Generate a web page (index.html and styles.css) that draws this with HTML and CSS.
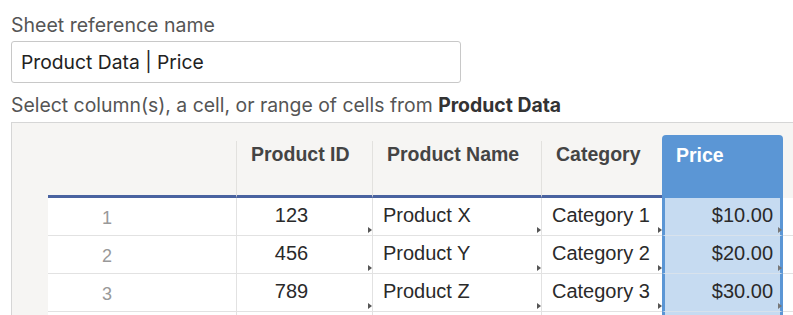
FILE: index.html
```html
<!DOCTYPE html>
<html lang="en">
<head>
    <meta charset="UTF-8">
    <title>Sheet reference</title>
    <link rel="stylesheet" href="styles.css">
</head>
<body>
    <div class="panel">
        <label class="field-label" for="ref-name">Sheet reference name</label>
        <div class="field-input" id="ref-name">Product Data | Price</div>
        <p class="hint">Select column(s), a cell, or range of cells from <strong>Product Data</strong></p>

        <div class="sheet">
            <div class="sheet-row head">
                <div class="gutter"></div>
                <div class="hcell rownum"></div>
                <div class="hcell sep">Product ID</div>
                <div class="hcell sep">Product Name</div>
                <div class="hcell sep">Category</div>
                <div class="hcell picked">Price</div>
                <div class="filler"></div>
            </div>

            <div class="sheet-row">
                <div class="gutter"></div>
                <div class="cell rownum">1</div>
                <div class="cell sep center">123<i class="mark"></i></div>
                <div class="cell sep">Product X<i class="mark"></i></div>
                <div class="cell sep">Category 1<i class="mark"></i></div>
                <div class="cell picked right">$10.00<i class="mark"></i></div>
                <div class="cell blank"></div>
            </div>
            <div class="sheet-row">
                <div class="gutter"></div>
                <div class="cell rownum">2</div>
                <div class="cell sep center">456<i class="mark"></i></div>
                <div class="cell sep">Product Y<i class="mark"></i></div>
                <div class="cell sep">Category 2<i class="mark"></i></div>
                <div class="cell picked right">$20.00<i class="mark"></i></div>
                <div class="cell blank"></div>
            </div>
            <div class="sheet-row">
                <div class="gutter"></div>
                <div class="cell rownum">3</div>
                <div class="cell sep center">789<i class="mark"></i></div>
                <div class="cell sep">Product Z<i class="mark"></i></div>
                <div class="cell sep">Category 3<i class="mark"></i></div>
                <div class="cell picked right">$30.00<i class="mark"></i></div>
                <div class="cell blank"></div>
            </div>
            <div class="sheet-row">
                <div class="gutter"></div>
                <div class="cell rownum"></div>
                <div class="cell sep"></div>
                <div class="cell sep"></div>
                <div class="cell sep"></div>
                <div class="cell picked"></div>
                <div class="cell blank"></div>
            </div>
        </div>
    </div>
</body>
</html>
```

FILE: styles.css
```css
body {
    margin: 0;
    background: #ffffff;
    font-family: Inter, 'Noto Sans', sans-serif;
    overflow: hidden;
}
.panel {
    padding: 14px 0 0 11px;
}
.field-label {
    display: block;
    font-size: 19.5px;
    line-height: 22px;
    color: #555;
}
.field-input {
    box-sizing: border-box;
    width: 450px;
    height: 42px;
    margin-top: 5px;
    padding: 0 9px;
    border: 1px solid #c8c8c8;
    border-radius: 3px;
    font-size: 19.3px;
    line-height: 40px;
    color: #222;
}
.hint {
    margin: 10px 0 0;
    font-size: 19.4px;
    line-height: 24px;
    color: #555;
}
.hint strong {
    color: #333;
}

/* sheet grid */
.sheet {
    margin-top: 5px;
    border-top: 1px solid #d6d6d6;
    border-left: 1px solid #d6d6d6;
    background: #f6f5f3;
    font-family: 'Liberation Sans', Arial, sans-serif;
}
.sheet-row {
    display: grid;
    grid-template-columns: 36px 188px 136px 169px 121px 121px 1fr;
}
.sheet-row.head {
    height: 75px;
    align-items: end;
}
.hcell {
    box-sizing: border-box;
    height: 57px;
    padding: 2px 0 0 14px;
    border-bottom: 3px solid #4a63a0;
    font-size: 19.5px;
    font-weight: 700;
    line-height: 23px;
    color: #444;
}
.hcell.sep {
    border-left: 1px solid #e2e1de;
}
.hcell.picked {
    height: 63px;
    padding-top: 9px;
    border-bottom: 0;
    border-radius: 4px 4px 0 0;
    background: #5b96d5;
    color: #fff;
}
.cell {
    position: relative;
    box-sizing: border-box;
    height: 38px;
    padding: 0 10px;
    border-bottom: 1px solid #e2e2e2;
    background: #fff;
    font-size: 20px;
    line-height: 34px;
    color: #2a2a2a;
    white-space: nowrap;
}
.cell.sep {
    border-left: 1px solid #e2e2e2;
}
.cell.center {
    text-align: center;
    padding-right: 36px;
}
.cell.right {
    text-align: right;
}
.cell.rownum {
    padding: 3px 70px 0 0;
    text-align: center;
    font-size: 18px;
    color: #999;
}
.cell.picked {
    padding-right: 7px;
    border-left: 3px solid #5b96d5;
    border-right: 3px solid #5b96d5;
    border-bottom-color: #d8e2ec;
    background: #c6dbf1;
}
.mark {
    position: absolute;
    right: 0;
    bottom: 2px;
    width: 0;
    height: 0;
    border-left: 4px solid #555;
    border-top: 3px solid transparent;
    border-bottom: 3px solid transparent;
}
.cell.picked .mark {
    right: -2px;
    border-left-color: #777;
}
```
